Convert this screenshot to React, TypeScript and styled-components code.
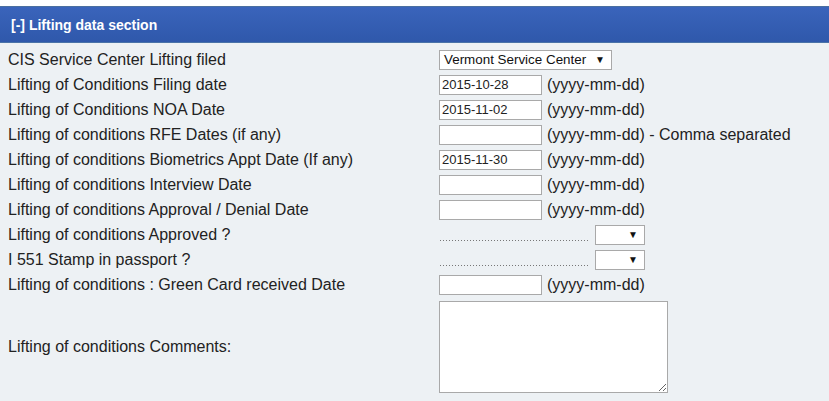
import React from "react";
import styled, { createGlobalStyle } from "styled-components";

const Global = createGlobalStyle`
  html, body { margin: 0; padding: 0; background: #ffffff; }
  body { font-family: "Liberation Sans", Arial, sans-serif; }
`;

const Page = styled.div`
  padding-top: 6px;
  width: 829px;
`;

const Header = styled.div`
  height: 35px;
  border-top: 1px solid #4a6fa0;
  border-bottom: 1px solid #4a73a8;
  background: linear-gradient(#3a64bb, #2f58ab);
  color: #ffffff;
  font-weight: bold;
  font-size: 14px;
  display: flex;
  align-items: center;
  padding-left: 11px;
`;

const Body = styled.div`
  background: #edf1f4;
  padding: 4px 0 9px 8px;
  display: grid;
  grid-template-columns: 431px 1fr;
  grid-auto-rows: 25px;
  align-items: center;
  color: #222;
  font-size: 16px;
`;

const Label = styled.div<{ $tall?: boolean }>`
  white-space: nowrap;
  ${(p) => (p.$tall ? "grid-row: span 4; align-self: center;" : "")}
`;

const Field = styled.div<{ $tall?: boolean }>`
  display: flex;
  align-items: center;
  gap: 5px;
  ${(p) => (p.$tall ? "grid-row: span 4; align-self: start; padding-top: 4px;" : "")}
`;

const DateInput = styled.input`
  width: 103px;
  height: 20px;
  box-sizing: border-box;
  border: 1px solid #a9a9a9;
  background: #fff;
  font-family: "Liberation Sans", Arial, sans-serif;
  font-size: 13px;
  padding: 0 2px;
  color: #222;
  margin: 0;
`;

const Hint = styled.span`
  font-size: 16px;
  color: #222;
`;

const SelectBox = styled.div<{ $w: number }>`
  width: ${(p) => p.$w}px;
  height: 20px;
  box-sizing: border-box;
  border: 1px solid #a9a9a9;
  background: #fff;
  display: flex;
  align-items: center;
  justify-content: space-between;
  padding: 0 6px 0 4px;
  font-size: 13.4px;
  color: #111;
`;

const Arrow = styled.span`
  font-size: 10px;
  color: #111;
`;

const Dots = styled.div`
  width: 150px;
  height: 1px;
  background-image: linear-gradient(to right, #777 1px, transparent 1px);
  background-size: 3px 1px;
  margin-top: 11px;
  margin-left: 1px;
`;

const Comments = styled.textarea`
  width: 229px;
  height: 92px;
  box-sizing: border-box;
  border: 1px solid #a9a9a9;
  background: #fff;
  margin: 0;
  font-family: "Liberation Sans", Arial, sans-serif;
`;

type Row =
  | { label: string; kind: "date"; value?: string; hint?: string }
  | { label: string; kind: "center" }
  | { label: string; kind: "yesno" };

const rows: Row[] = [
  { label: "CIS Service Center Lifting filed", kind: "center" },
  { label: "Lifting of Conditions Filing date", kind: "date", value: "2015-10-28" },
  { label: "Lifting of Conditions NOA Date", kind: "date", value: "2015-11-02" },
  { label: "Lifting of conditions RFE Dates (if any)", kind: "date", hint: "(yyyy-mm-dd) - Comma separated" },
  { label: "Lifting of conditions Biometrics Appt Date (If any)", kind: "date", value: "2015-11-30" },
  { label: "Lifting of conditions Interview Date", kind: "date" },
  { label: "Lifting of conditions Approval / Denial Date", kind: "date" },
  { label: "Lifting of conditions Approved ?", kind: "yesno" },
  { label: "I 551 Stamp in passport ?", kind: "yesno" },
  { label: "Lifting of conditions : Green Card received Date", kind: "date" },
];

export default function App() {
  return (
    <Page>
      <Global />
      <Header>[-] Lifting data section</Header>
      <Body>
        {rows.map((r) => (
          <React.Fragment key={r.label}>
            <Label>{r.label}</Label>
            <Field>
              {r.kind === "center" && (
                <SelectBox $w={173}>
                  <span>Vermont Service Center</span>
                  <Arrow>▼</Arrow>
                </SelectBox>
              )}
              {r.kind === "date" && (
                <>
                  <DateInput defaultValue={r.value ?? ""} />
                  <Hint>{r.hint ?? "(yyyy-mm-dd)"}</Hint>
                </>
              )}
              {r.kind === "yesno" && (
                <>
                  <Dots />
                  <SelectBox $w={50}>
                    <span />
                    <Arrow>▼</Arrow>
                  </SelectBox>
                </>
              )}
            </Field>
          </React.Fragment>
        ))}
        <Label $tall>Lifting of conditions Comments:</Label>
        <Field $tall>
          <Comments />
        </Field>
      </Body>
    </Page>
  );
}
